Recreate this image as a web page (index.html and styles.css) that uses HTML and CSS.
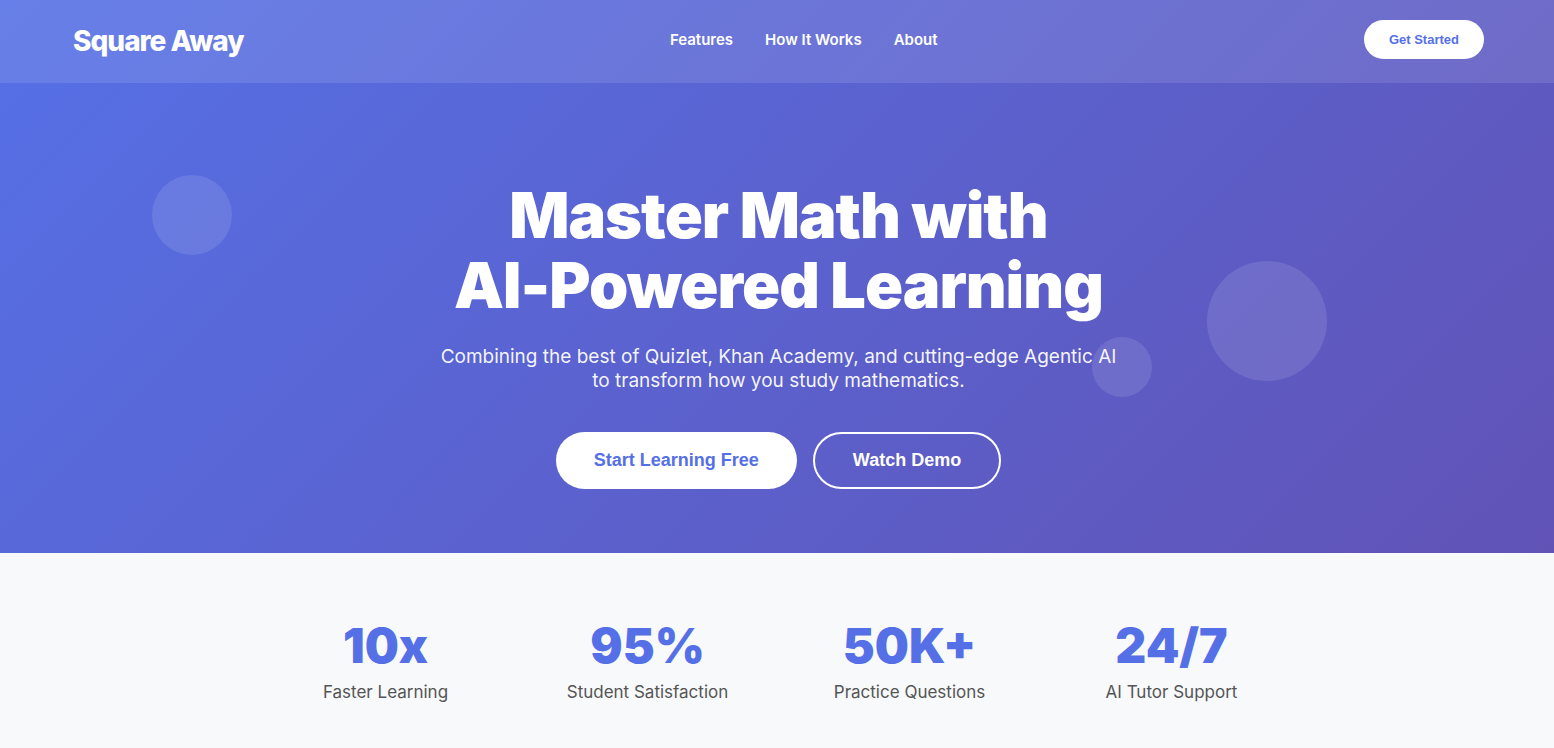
FILE: index.html
```html
<!DOCTYPE html>
<html lang="en">
<head>
<meta charset="utf-8">
<meta name="viewport" content="width=device-width, initial-scale=1">
<title>Square Away</title>
<link rel="stylesheet" href="styles.css">
</head>
<body>
<div class="top">
  <header class="header">
    <a class="logo" href="#">Square Away</a>
    <nav class="nav">
      <a href="#features">Features</a>
      <a href="#how">How It Works</a>
      <a href="#about">About</a>
    </nav>
    <button class="btn btn-small" type="button">Get Started</button>
  </header>
  <main class="hero">
    <span class="bubble bubble-one"></span>
    <span class="bubble bubble-two"></span>
    <span class="bubble bubble-three"></span>
    <h1 class="title">Master Math with<br>AI-Powered Learning</h1>
    <p class="subtitle">Combining the best of Quizlet, Khan Academy, and cutting-edge Agentic AI to transform how you study mathematics.</p>
    <div class="actions">
      <button class="btn btn-primary" type="button">Start Learning Free</button>
      <button class="btn btn-outline" type="button">Watch Demo</button>
    </div>
  </main>
</div>
<section class="stats">
  <div class="stats-grid">
    <div class="stat"><div class="value">10x</div><div class="label">Faster Learning</div></div>
    <div class="stat"><div class="value">95%</div><div class="label">Student Satisfaction</div></div>
    <div class="stat"><div class="value">50K+</div><div class="label">Practice Questions</div></div>
    <div class="stat"><div class="value">24/7</div><div class="label">AI Tutor Support</div></div>
  </div>
</section>
</body>
</html>
```
FILE: styles.css
```css
* { box-sizing: border-box; }
body {
  margin: 0;
  min-height: 100vh;
  background: #f7f9fb;
  font-family: Inter, "Liberation Sans", sans-serif;
}
.top {
  background: linear-gradient(135deg, #5570e6 0%, #6153b6 100%);
}
.header {
  display: flex;
  justify-content: space-between;
  align-items: flex-start;
  padding: 20px 70px 20px 73px;
  background: rgba(255, 255, 255, 0.11);
}
.logo {
  color: #fff;
  font-size: 28px;
  line-height: 43px;
  font-weight: 800;
  letter-spacing: -1px;
  text-decoration: none;
}
.nav { display: flex; gap: 32px; }
.nav a {
  color: #fff;
  font-size: 15px;
  line-height: 40px;
  font-weight: 600;
  text-decoration: none;
}
.btn {
  border: 0;
  border-radius: 50px;
  background: #fff;
  color: #5570e6;
  font-family: "Liberation Sans", Arial, sans-serif;
  font-weight: 700;
}
.btn-small {
  padding: 12px 25px;
  font-size: 13px;
  line-height: 15px;
}
.hero {
  position: relative;
  padding: 97px 20px 64px 23px;
  text-align: center;
  color: #fff;
}
.bubble {
  position: absolute;
  border-radius: 50%;
  background: rgba(255, 255, 255, 0.11);
}
.bubble-one { width: 80px; height: 80px; left: 152px; top: 92px; }
.bubble-two { width: 120px; height: 120px; right: 227px; top: 178px; }
.bubble-three { width: 60px; height: 60px; right: 402px; top: 254px; }
.title {
  position: relative;
  margin: 0 0 25px;
  font-size: 63px;
  line-height: 70px;
  font-weight: 900;
  letter-spacing: -1px;
}
.subtitle {
  position: relative;
  max-width: 690px;
  margin: 0 auto 39px;
  font-size: 19px;
  line-height: 24px;
  font-weight: 400;
  color: rgba(255, 255, 255, 0.95);
}
.actions {
  position: relative;
  display: flex;
  justify-content: center;
  gap: 16px;
}
.btn-primary, .btn-outline {
  padding: 18px 38px;
  font-size: 18px;
  line-height: 21px;
}
.btn-outline {
  padding: 16px 38px;
  border: 2px solid #fff;
  background: transparent;
  color: #fff;
}
.stats { padding: 64px 20px 64px 23px; }
.stats-grid {
  display: grid;
  grid-template-columns: repeat(4, 1fr);
  max-width: 1048px;
  margin: 0 auto;
  text-align: center;
}
.value {
  color: #5570e6;
  font-size: 48px;
  line-height: 58px;
  font-weight: 900;
}
.label {
  margin-top: 6px;
  color: #555;
  font-size: 17px;
  line-height: 22px;
}
```
